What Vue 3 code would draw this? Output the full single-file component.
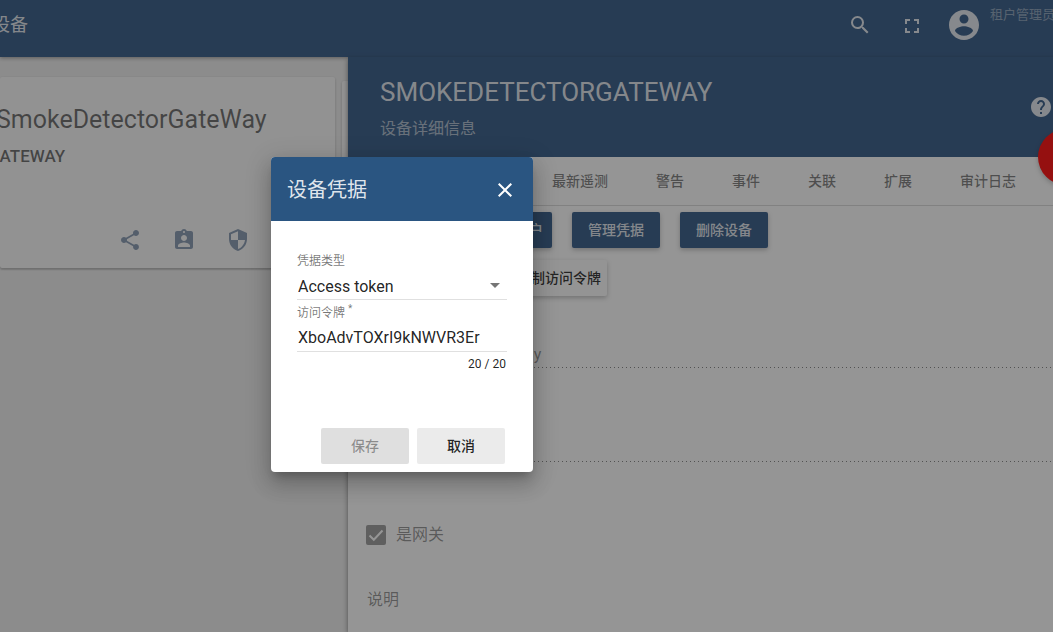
<script setup>
import { ref } from 'vue'

const tabs = ['详情', '设备属性', '最新遥测', '警告', '事件', '关联', '扩展', '审计日志']
const actions = ['设为公开', '分配给客户', '管理凭据', '删除设备']
const credentialType = ref('token')
const accessToken = ref('XboAdvTOXrI9kNWVR3Er')
const deviceName = 'SmokeDetectorGateWay'
</script>

<template>
  <div class="app">
    <header class="toolbar">
      <h1 class="toolbar-title">设备</h1>
      <div class="toolbar-tools">
        <button class="icon-btn" aria-label="搜索">
          <svg class="icon" viewBox="0 0 24 24"><path d="M15.5 14h-.79l-.28-.27A6.47 6.47 0 0 0 16 9.5 6.5 6.5 0 1 0 9.5 16c1.61 0 3.09-.59 4.23-1.57l.27.28v.79l5 4.99L20.49 19l-4.99-5zm-6 0C7.01 14 5 11.99 5 9.5S7.01 5 9.5 5 14 7.01 14 9.5 11.99 14 9.5 14z" /></svg>
        </button>
        <button class="icon-btn fullscreen" aria-label="全屏">
          <svg class="icon" viewBox="0 0 24 24"><path d="M7 14H5v5h5v-2H7v-3zm-2-4h2V7h3V5H5v5zm12 7h-3v2h5v-5h-2v3zM14 5v2h3v3h2V5h-5z" /></svg>
        </button>
        <button class="icon-btn account" aria-label="账户">
          <svg class="icon large" viewBox="0 0 24 24"><path d="M12 2C6.48 2 2 6.48 2 12s4.48 10 10 10 10-4.48 10-10S17.52 2 12 2zm0 3c1.66 0 3 1.34 3 3s-1.34 3-3 3-3-1.34-3-3 1.34-3 3-3zm0 14.2c-2.5 0-4.71-1.28-6-3.22.03-1.99 4-3.08 6-3.08 1.99 0 5.97 1.09 6 3.08-1.29 1.94-3.5 3.22-6 3.22z" /></svg>
        </button>
        <span class="role">租户管理员</span>
      </div>
    </header>

    <div class="body">
      <section class="list">
        <article class="card">
          <h2 class="card-title">SmokeDetectorGateWay</h2>
          <p class="card-type">GATEWAY</p>
          <div class="card-actions">
            <button class="icon-btn" aria-label="分享">
              <svg class="icon" viewBox="0 0 24 24"><path d="M18 16.08c-.76 0-1.44.3-1.96.77L8.91 12.7c.05-.23.09-.46.09-.7s-.04-.47-.09-.7l7.05-4.11c.54.5 1.25.81 2.04.81 1.66 0 3-1.34 3-3s-1.34-3-3-3-3 1.34-3 3c0 .24.04.47.09.7L8.04 9.81C7.5 9.31 6.79 9 6 9c-1.66 0-3 1.34-3 3s1.34 3 3 3c.79 0 1.5-.31 2.04-.81l7.12 4.16c-.05.21-.08.43-.08.65 0 1.61 1.31 2.92 2.92 2.92s2.92-1.31 2.92-2.92-1.31-2.92-2.92-2.92z" /></svg>
            </button>
            <button class="icon-btn" aria-label="分配给客户">
              <svg class="icon" viewBox="0 0 24 24"><path d="M19 3h-4.18C14.4 1.84 13.3 1 12 1s-2.4.84-2.82 2H5c-1.1 0-2 .9-2 2v14c0 1.1.9 2 2 2h14c1.1 0 2-.9 2-2V5c0-1.1-.9-2-2-2zm-7 0c.55 0 1 .45 1 1s-.45 1-1 1-1-.45-1-1 .45-1 1-1zm0 4c1.66 0 3 1.34 3 3s-1.34 3-3 3-3-1.34-3-3 1.34-3 3-3zm6 12H6v-1.4c0-2 4-3.1 6-3.1s6 1.1 6 3.1V19z" /></svg>
            </button>
            <button class="icon-btn" aria-label="管理凭据">
              <svg class="icon" viewBox="0 0 24 24"><path d="M12 1L3 5v6c0 5.55 3.84 10.74 9 12 5.16-1.26 9-6.45 9-12V5l-9-4zm0 10.99h7c-.53 4.12-3.28 7.79-7 8.94V12H5V6.3l7-3.11v8.8z" /></svg>
            </button>
          </div>
        </article>
        <article class="card next"></article>
      </section>

      <main class="details">
        <header class="details-head">
          <div>
            <h2 class="details-title">SMOKEDETECTORGATEWAY</h2>
            <p class="details-sub">设备详细信息</p>
          </div>
          <button class="icon-btn help" aria-label="帮助">
            <svg class="icon" viewBox="0 0 24 24"><path d="M12 2C6.48 2 2 6.48 2 12s4.48 10 10 10 10-4.48 10-10S17.52 2 12 2zm1 17h-2v-2h2v2zm2.07-7.75l-.9.92C13.45 12.9 13 13.5 13 15h-2v-.5c0-1.1.45-2.1 1.17-2.83l1.24-1.26c.37-.36.59-.86.59-1.41 0-1.1-.9-2-2-2s-2 .9-2 2H8c0-2.21 1.79-4 4-4s4 1.79 4 4c0 .88-.36 1.68-.93 2.25z" /></svg>
          </button>
          <button class="fab" aria-label="编辑"></button>
        </header>

        <nav class="tabs">
          <button v-for="tab in tabs" :key="tab" class="tab">{{ tab }}</button>
        </nav>

        <div class="content">
          <div class="row">
            <button v-for="action in actions" :key="action" class="btn primary">{{ action }}</button>
          </div>
          <div class="row">
            <button class="btn raised">
              <svg class="icon" viewBox="0 0 24 24"><path d="M19 3h-4.200a3 3 0 0 0-5.600 0H5a2 2 0 0 0-2 2v14a2 2 0 0 0 2 2h14a2 2 0 0 0 2-2V5a2 2 0 0 0-2-2zM7 7h10V5h2v14H5V5h2z" /></svg>
              复制设备ID
            </button>
            <button class="btn raised">
              <svg class="icon" viewBox="0 0 24 24"><path d="M19 3h-4.200a3 3 0 0 0-5.600 0H5a2 2 0 0 0-2 2v14a2 2 0 0 0 2 2h14a2 2 0 0 0 2-2V5a2 2 0 0 0-2-2zM7 7h10V5h2v14H5V5h2z" /></svg>
              复制访问令牌
            </button>
          </div>

          <div class="form">
            <input class="field" aria-label="名称" :value="deviceName" disabled />
            <input class="field" aria-label="设备类型" value="GATEWAY" disabled />
            <label class="check">
              <input type="checkbox" checked disabled />
              <span class="box">
                <svg viewBox="0 0 20 20"><path d="M3.500 10.500l4.300 4.300L16.500 5.500" /></svg>
              </span>
              是网关
            </label>
            <label class="desc">说明<textarea disabled></textarea></label>
          </div>
        </div>
      </main>
    </div>

    <div class="backdrop"></div>

    <form class="dialog" role="dialog" aria-labelledby="dialog-title" @submit.prevent>
      <header class="dialog-head">
        <h2 id="dialog-title">设备凭据</h2>
        <button type="button" class="icon-btn" aria-label="关闭">
          <svg class="icon" viewBox="0 0 24 24"><path d="M19 6.410L17.590 5 12 10.590 6.410 5 5 6.410 10.590 12 5 17.590 6.410 19 12 13.410 17.590 19 19 17.590 13.410 12z" /></svg>
        </button>
      </header>
      <div class="dialog-body">
        <label for="cred-type">凭据类型</label>
        <div class="select">
          <select id="cred-type" v-model="credentialType">
            <option value="token">Access token</option>
          </select>
          <svg class="arrow" viewBox="0 0 10 5"><path d="M0 0h10L5 5z" /></svg>
        </div>
        <label for="token">访问令牌<sup>*</sup></label>
        <input id="token" v-model="accessToken" type="text" maxlength="20" />
        <p class="counter">{{ accessToken.length }} / 20</p>
      </div>
      <footer class="dialog-actions">
        <button type="submit" class="btn flat" disabled>保存</button>
        <button type="button" class="btn flat">取消</button>
      </footer>
    </form>
  </div>
</template>

<style>
body {
  margin: 0;
}
</style>

<style scoped>
.app {
  position: relative;
  display: flex;
  flex-direction: column;
  min-height: 100vh;
  overflow: hidden;
  background: #eee;
  color: rgba(0, 0, 0, 0.87);
  font-family: Roboto, "Noto Sans CJK SC", sans-serif;
  font-size: 16px;
}
.app * {
  box-sizing: border-box;
}
h1, h2, p {
  margin: 0;
  font-weight: 400;
}
button, input, select, textarea {
  margin: 0;
  padding: 0;
  border: 0;
  font: inherit;
  color: inherit;
  background: none;
}
.icon {
  display: block;
  width: 24px;
  height: 24px;
  fill: currentColor;
}
.icon.large {
  width: 36px;
  height: 36px;
}
.icon-btn {
  flex: none;
}

.toolbar {
  display: flex;
  justify-content: space-between;
  height: 57px;
  padding-bottom: 7px;
  background: #2d5583;
  color: rgba(255, 255, 255, 0.87);
  box-shadow: 0 1px 4px rgba(0, 0, 0, 0.4);
  z-index: 1;
}
.toolbar-title {
  margin-left: -8px;
  align-self: center;
  font-size: 18px;
  line-height: 24px;
}
.toolbar-tools {
  display: flex;
  align-items: center;
}
.fullscreen {
  margin-left: 28px;
  padding-top: 2px;
}
.account {
  margin-left: 22px;
}
.role {
  align-self: flex-start;
  width: 63px;
  margin-left: 8px;
  padding-top: 5px;
  overflow: hidden;
  font-size: 13px;
  line-height: 20px;
  white-space: nowrap;
  opacity: 0.5;
}

.body {
  flex: 1;
  display: flex;
}
.list {
  flex: none;
  display: flex;
  align-items: flex-start;
  gap: 7px;
  width: 348px;
  padding-top: 20px;
  overflow: hidden;
}
.card {
  flex: none;
  width: 335px;
  height: 191px;
  padding-top: 24px;
  background: #fafafa;
  color: rgba(0, 0, 0, 0.6);
  border-radius: 2px;
  box-shadow: 0 1px 3px rgba(0, 0, 0, 0.2), 0 2px 1px rgba(0, 0, 0, 0.1);
}
.card.next {
  margin-top: 4px;
}
.card-title {
  margin-left: -4px;
  font-size: 25px;
  line-height: 37px;
}
.card-type {
  margin-left: -12px;
  padding-top: 6px;
  font-size: 17px;
  font-weight: 500;
  line-height: 24px;
}
.card-actions {
  display: flex;
  justify-content: flex-end;
  gap: 30px;
  padding: 60px 85px 0 0;
  color: #8396af;
}

.details {
  position: relative;
  flex: 1;
  min-width: 0;
  background: #fff;
  box-shadow: 0 2px 5px rgba(0, 0, 0, 0.5);
  z-index: 1;
}
.details-head {
  position: relative;
  display: flex;
  justify-content: space-between;
  height: 100px;
  padding: 18px 0 0 32px;
  background: #2d5583;
  color: rgba(255, 255, 255, 0.87);
}
.details-title {
  font-size: 26px;
  line-height: 34px;
}
.details-sub {
  padding-top: 8px;
  font-size: 16px;
  line-height: 24px;
  opacity: 0.7;
}
.help {
  align-self: flex-start;
  padding-top: 20px;
}
.fab {
  position: absolute;
  right: -41px;
  bottom: -28px;
  width: 56px;
  height: 56px;
  border-radius: 50%;
  background: #f00;
  box-shadow: 0 2px 5px rgba(0, 0, 0, 0.26);
}
.tabs {
  display: flex;
  height: 49px;
  overflow: hidden;
  border-bottom: 1px solid rgba(0, 0, 0, 0.15);
}
.tab {
  flex: none;
  padding: 0 24px 2px;
  color: rgba(0, 0, 0, 0.54);
  font-size: 14px;
  font-weight: 500;
}
.content {
  padding: 6px 0 0 8px;
}
.row {
  display: flex;
  gap: 20px;
  margin-bottom: 12px;
}
.btn {
  display: flex;
  align-items: center;
  justify-content: center;
  min-width: 88px;
  height: 36px;
  padding: 0 6px 2px;
  border-radius: 2px;
  font-size: 14px;
  font-weight: 500;
  white-space: nowrap;
}
.btn.primary {
  background: #2d5583;
  color: rgba(255, 255, 255, 0.87);
  box-shadow: 0 2px 5px rgba(0, 0, 0, 0.26);
}
.btn.raised {
  gap: 3px;
  background: #fefefe;
  box-shadow: 0 2px 5px rgba(0, 0, 0, 0.26);
}
.form {
  display: flex;
  flex-direction: column;
  padding: 32px 0 16px 10px;
}
.field {
  width: 100%;
  height: 28px;
  margin-bottom: 66px;
  padding: 0 2px;
  color: rgba(0, 0, 0, 0.45);
  background: linear-gradient(to right, rgba(0, 0, 0, 0.5) 0 33%, transparent 33%) 0 100% / 4px 1px repeat-x;
}
.check {
  display: flex;
  align-items: center;
  gap: 10px;
  margin-top: -4px;
  color: rgba(0, 0, 0, 0.45);
  line-height: 22px;
}
.check input {
  position: absolute;
  opacity: 0;
}
.box {
  width: 20px;
  height: 20px;
  border-radius: 2px;
  background: #989898;
}
.box svg {
  display: block;
  fill: none;
  stroke: #fff;
  stroke-width: 2;
}
.desc {
  display: flex;
  margin-top: 42px;
  padding-left: 1px;
  color: rgba(0, 0, 0, 0.45);
  line-height: 24px;
}
.desc textarea {
  flex: 1;
  height: 24px;
  resize: none;
}

.backdrop {
  position: absolute;
  inset: 0;
  background: rgba(33, 33, 33, 0.48);
  z-index: 2;
}
.dialog {
  position: absolute;
  top: 157px;
  left: 271px;
  width: 262px;
  border-radius: 4px;
  background: #fff;
  box-shadow: 0 7px 8px -4px rgba(0, 0, 0, 0.2), 0 13px 19px 2px rgba(0, 0, 0, 0.14), 0 5px 24px 4px rgba(0, 0, 0, 0.12);
  overflow: hidden;
  z-index: 3;
}
.dialog-head {
  display: flex;
  align-items: center;
  justify-content: space-between;
  height: 64px;
  padding: 0 16px;
  background: #2a5581;
  color: rgba(255, 255, 255, 0.87);
}
.dialog-head h2 {
  padding-bottom: 2px;
  font-size: 20px;
}
.dialog-head .icon-btn {
  padding-top: 2px;
}
.dialog-head .icon {
  fill: #fff;
}
.dialog-body {
  padding: 32px 26px 0;
}
.dialog-body label {
  display: block;
  color: rgba(0, 0, 0, 0.54);
  font-size: 12px;
  line-height: 16px;
}
.dialog-body sup {
  margin-left: 3px;
  font-size: 10px;
  line-height: 0;
}
.select {
  display: grid;
  align-items: center;
  margin-bottom: 5px;
}
.select select,
.arrow {
  grid-area: 1 / 1;
}
.select select,
.dialog-body input {
  display: block;
  appearance: none;
  width: 100%;
  height: 31px;
  padding: 3px 1px 0;
  border-bottom: 1px solid rgba(0, 0, 0, 0.12);
  border-radius: 0;
  outline: none;
}
.select select {
  padding-top: 5px;
}
.arrow {
  justify-self: end;
  width: 10px;
  height: 5px;
  margin: 2px 7px 0 0;
  fill: rgba(0, 0, 0, 0.54);
  pointer-events: none;
}
.counter {
  padding: 4px 1px 0 0;
  font-size: 12px;
  line-height: 16px;
  text-align: right;
}
.dialog-actions {
  display: flex;
  justify-content: flex-end;
  gap: 8px;
  padding: 56px 28px 8px 0;
}
.btn.flat {
  background: #ebebeb;
}
.btn.flat:disabled {
  background: #dfdfdf;
  color: rgba(0, 0, 0, 0.38);
}
</style>
